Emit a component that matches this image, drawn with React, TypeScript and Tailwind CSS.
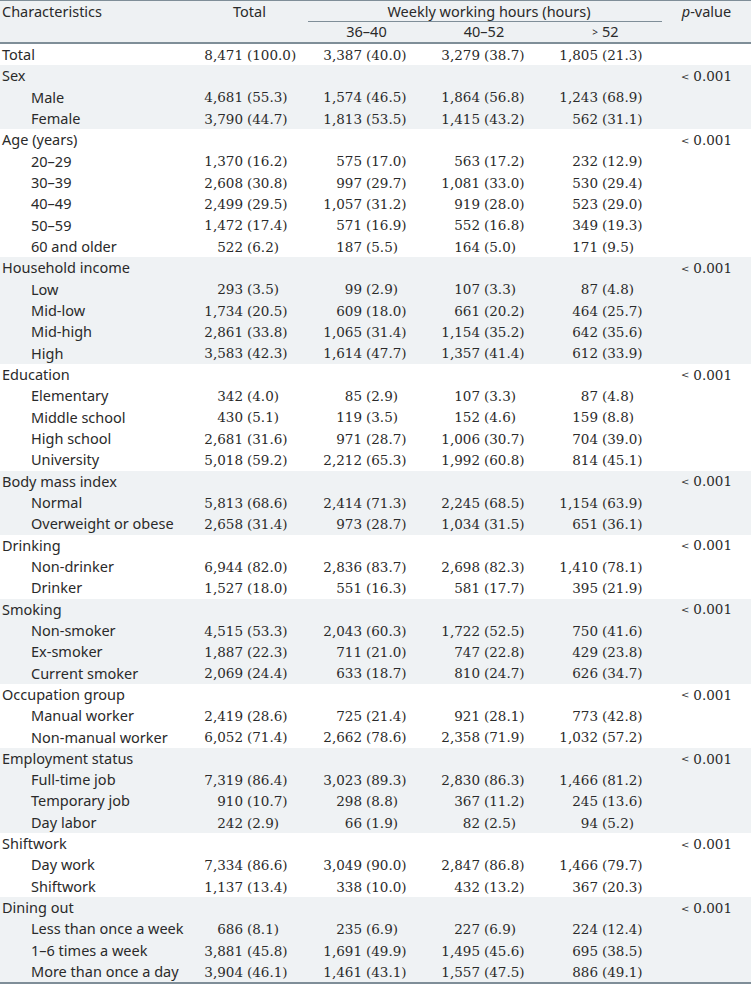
const cols = "grid grid-cols-[200px_108px_117px_118px_119px_89px]";
const label = "font-['Noto_Sans',sans-serif] text-[14.5px] text-[#2a2a2a]";
const num = "font-['DejaVu_Serif',serif] text-[13.5px] text-[#2a2a2a]";

type Cell = [string, string];
type Item = { name: string; cells: Cell[] };
type Group = { title: string; p: string; items: Item[] };

function r(name: string, ...vals: string[]): Item {
  return {
    name,
    cells: vals.map((v) => {
      const i = v.indexOf(" (");
      return [v.slice(0, i), v.slice(i + 1)] as Cell;
    }),
  };
}

const groups: Group[] = [
  {
    title: "Sex",
    p: "0.001",
    items: [
      r("Male", "4,681 (55.3)", "1,574 (46.5)", "1,864 (56.8)", "1,243 (68.9)"),
      r("Female", "3,790 (44.7)", "1,813 (53.5)", "1,415 (43.2)", "562 (31.1)"),
    ],
  },
  {
    title: "Age (years)",
    p: "0.001",
    items: [
      r("20–29", "1,370 (16.2)", "575 (17.0)", "563 (17.2)", "232 (12.9)"),
      r("30–39", "2,608 (30.8)", "997 (29.7)", "1,081 (33.0)", "530 (29.4)"),
      r("40–49", "2,499 (29.5)", "1,057 (31.2)", "919 (28.0)", "523 (29.0)"),
      r("50–59", "1,472 (17.4)", "571 (16.9)", "552 (16.8)", "349 (19.3)"),
      r("60 and older", "522 (6.2)", "187 (5.5)", "164 (5.0)", "171 (9.5)"),
    ],
  },
  {
    title: "Household income",
    p: "0.001",
    items: [
      r("Low", "293 (3.5)", "99 (2.9)", "107 (3.3)", "87 (4.8)"),
      r("Mid-low", "1,734 (20.5)", "609 (18.0)", "661 (20.2)", "464 (25.7)"),
      r("Mid-high", "2,861 (33.8)", "1,065 (31.4)", "1,154 (35.2)", "642 (35.6)"),
      r("High", "3,583 (42.3)", "1,614 (47.7)", "1,357 (41.4)", "612 (33.9)"),
    ],
  },
  {
    title: "Education",
    p: "0.001",
    items: [
      r("Elementary", "342 (4.0)", "85 (2.9)", "107 (3.3)", "87 (4.8)"),
      r("Middle school", "430 (5.1)", "119 (3.5)", "152 (4.6)", "159 (8.8)"),
      r("High school", "2,681 (31.6)", "971 (28.7)", "1,006 (30.7)", "704 (39.0)"),
      r("University", "5,018 (59.2)", "2,212 (65.3)", "1,992 (60.8)", "814 (45.1)"),
    ],
  },
  {
    title: "Body mass index",
    p: "0.001",
    items: [
      r("Normal", "5,813 (68.6)", "2,414 (71.3)", "2,245 (68.5)", "1,154 (63.9)"),
      r("Overweight or obese", "2,658 (31.4)", "973 (28.7)", "1,034 (31.5)", "651 (36.1)"),
    ],
  },
  {
    title: "Drinking",
    p: "0.001",
    items: [
      r("Non-drinker", "6,944 (82.0)", "2,836 (83.7)", "2,698 (82.3)", "1,410 (78.1)"),
      r("Drinker", "1,527 (18.0)", "551 (16.3)", "581 (17.7)", "395 (21.9)"),
    ],
  },
  {
    title: "Smoking",
    p: "0.001",
    items: [
      r("Non-smoker", "4,515 (53.3)", "2,043 (60.3)", "1,722 (52.5)", "750 (41.6)"),
      r("Ex-smoker", "1,887 (22.3)", "711 (21.0)", "747 (22.8)", "429 (23.8)"),
      r("Current smoker", "2,069 (24.4)", "633 (18.7)", "810 (24.7)", "626 (34.7)"),
    ],
  },
  {
    title: "Occupation group",
    p: "0.001",
    items: [
      r("Manual worker", "2,419 (28.6)", "725 (21.4)", "921 (28.1)", "773 (42.8)"),
      r("Non-manual worker", "6,052 (71.4)", "2,662 (78.6)", "2,358 (71.9)", "1,032 (57.2)"),
    ],
  },
  {
    title: "Employment status",
    p: "0.001",
    items: [
      r("Full-time job", "7,319 (86.4)", "3,023 (89.3)", "2,830 (86.3)", "1,466 (81.2)"),
      r("Temporary job", "910 (10.7)", "298 (8.8)", "367 (11.2)", "245 (13.6)"),
      r("Day labor", "242 (2.9)", "66 (1.9)", "82 (2.5)", "94 (5.2)"),
    ],
  },
  {
    title: "Shiftwork",
    p: "0.001",
    items: [
      r("Day work", "7,334 (86.6)", "3,049 (90.0)", "2,847 (86.8)", "1,466 (79.7)"),
      r("Shiftwork", "1,137 (13.4)", "338 (10.0)", "432 (13.2)", "367 (20.3)"),
    ],
  },
  {
    title: "Dining out",
    p: "0.001",
    items: [
      r("Less than once a week", "686 (8.1)", "235 (6.9)", "227 (6.9)", "224 (12.4)"),
      r("1–6 times a week", "3,881 (45.8)", "1,691 (49.9)", "1,495 (45.6)", "695 (38.5)"),
      r("More than once a day", "3,904 (46.1)", "1,461 (43.1)", "1,557 (47.5)", "886 (49.1)"),
    ],
  },
];

// width of the number part, so the "(" lines up in each column
const numWidths = ["w-[43px]", "w-[54px]", "w-[55px]", "w-[55px]"];

function Values({ cells }: { cells: Cell[] }) {
  return (
    <>
      {cells.map(([n, pct], i) => (
        <div key={i} className={`flex items-center whitespace-nowrap ${num}`}>
          <span className={`${numWidths[i]} text-right`}>{n}</span>
          <span className="ml-[4px]">{pct}</span>
        </div>
      ))}
    </>
  );
}

function PValue({ p }: { p: string }) {
  return (
    <div className={`flex items-center justify-center whitespace-nowrap ${num}`}>
      <span className="text-[10px] mr-[4px]">&lt;</span>
      {p}
    </div>
  );
}

function GroupRows({ g, shaded }: { g: Group; shaded: boolean }) {
  const bg = shaded ? "bg-[#eff2f4]" : "bg-white";
  return (
    <div className={bg}>
      <div className={`${cols} h-[21.33px]`}>
        <div className={`flex items-center pl-[2px] ${label}`}>{g.title}</div>
        <div />
        <div />
        <div />
        <div />
        <PValue p={g.p} />
      </div>
      {g.items.map((it) => (
        <div key={it.name} className={`${cols} h-[21.33px]`}>
          <div className={`flex items-center pl-[31px] whitespace-nowrap ${label}`}>{it.name}</div>
          <Values cells={it.cells} />
          <div />
        </div>
      ))}
    </div>
  );
}

export default function App() {
  const total = r("Total", "8,471 (100.0)", "3,387 (40.0)", "3,279 (38.7)", "1,805 (21.3)");

  return (
    <div className="w-[751px] bg-white">
      {/* Header */}
      <div className={`${cols} grid-rows-[21px_20px] bg-[#eef1f3] border-t border-b-2 border-[#7f8e98]`}>
        <div className={`row-span-2 pl-[2px] ${label}`}>Characteristics</div>
        <div className={`row-span-2 pl-[33px] ${label}`}>Total</div>
        <div className="col-span-3 flex justify-center">
          <div className={`w-full border-b border-[#7f8e98] text-center pl-[8px] ${label}`}>
            Weekly working hours (hours)
          </div>
        </div>
        <div className={`row-span-2 text-center ${label}`}>
          <span className="italic">p</span>-value
        </div>
        <div className={`flex items-center justify-center ${label}`}>36–40</div>
        <div className={`flex items-center justify-center ${label}`}>40–52</div>
        <div className={`flex items-center justify-center pl-[6px] ${label}`}>
          <span className="text-[10px] mr-[4px]">&gt;</span>52
        </div>
      </div>

      {/* Total row */}
      <div className={`${cols} h-[21.33px]`}>
        <div className={`flex items-center pl-[2px] ${label}`}>Total</div>
        <Values cells={total.cells} />
        <div />
      </div>

      {groups.map((g, i) => (
        <GroupRows key={g.title} g={g} shaded={i % 2 === 0} />
      ))}

      <div className="border-t-2 border-[#7f8e98]" />
    </div>
  );
}
